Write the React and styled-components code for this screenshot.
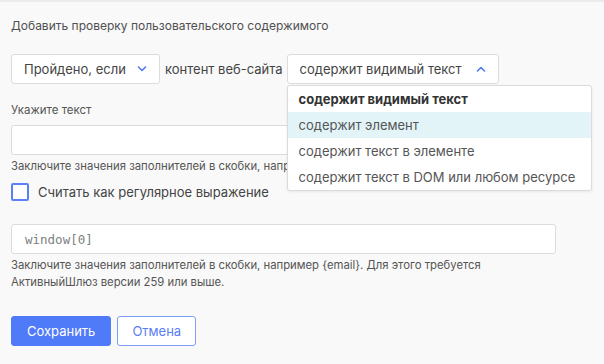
import React from "react";
import styled, { createGlobalStyle } from "styled-components";

const GlobalStyle = createGlobalStyle`
  body {
    margin: 0;
    background: #f9f9f9;
    font-family: Inter, "Noto Sans", sans-serif;
    color: #555;
  }
`;

const options = [
  "содержит видимый текст",
  "содержит элемент",
  "содержит текст в элементе",
  "содержит текст в DOM или любом ресурсе",
];

const Chevron = ({ up }) => (
  <svg width="10" height="6" viewBox="0 0 10 6">
    <path
      d={up ? "M1.5 5 L5 1.5 L8.5 5" : "M1.5 1 L5 4.5 L8.5 1"}
      fill="none"
      stroke="#4f7cf7"
      strokeWidth="1.6"
      strokeLinecap="round"
      strokeLinejoin="round"
    />
  </svg>
);

const App = () => {
  return (
    <>
      <GlobalStyle />
      <TopStrip />
      <Page>
        <Title>Добавить проверку пользовательского содержимого</Title>
        <Row>
          <Select width={149}>
            <span>Пройдено, если</span>
            <Chevron />
          </Select>
          <RowText>контент веб-сайта</RowText>
          <SelectWrap>
            <Select width={212}>
              <span>содержит видимый текст</span>
              <Chevron up />
            </Select>
            <Menu>
              {options.map((opt, i) => (
                <MenuItem key={opt} selected={i === 0} active={i === 1}>
                  {opt}
                </MenuItem>
              ))}
            </Menu>
          </SelectWrap>
        </Row>
        <Label>Укажите текст</Label>
        <Input />
        <Hint>
          Заключите значения заполнителей в скобки, например {"{email}"}. Для
          этого требуется АктивныйШлюз версии 259 или выше.
        </Hint>
        <CheckRow>
          <Checkbox />
          <span>Считать как регулярное выражение</span>
        </CheckRow>
        <Input mono top={23}>
          window[0]
        </Input>
        <HintBlock>
          Заключите значения заполнителей в скобки, например {"{email}"}. Для
          этого требуется
          <br />
          АктивныйШлюз версии 259 или выше.
        </HintBlock>
        <Buttons>
          <Button primary>Сохранить</Button>
          <Button>Отмена</Button>
        </Buttons>
      </Page>
    </>
  );
};

const TopStrip = styled.div`
  height: 2px;
  background: #ececec;
`;
const Page = styled.div`
  padding: 0 11px;
  display: flex;
  flex-direction: column;
  align-items: flex-start;
`;
const Title = styled.div`
  margin-top: 16px;
  font-size: 12px;
  line-height: 16px;
  color: #505050;
`;
const Row = styled.div`
  margin-top: 20px;
  display: flex;
  align-items: center;
  gap: 5px;
`;
const RowText = styled.span`
  font-size: 13px;
  color: #444;
`;
const SelectWrap = styled.div`
  position: relative;
  margin-left: -1px;
`;
const Select = styled.div`
  box-sizing: border-box;
  width: ${(p) => p.width}px;
  height: 30px;
  padding: 0 12px;
  background: #fff;
  border: 1px solid #dcdcdc;
  border-radius: 3px;
  display: flex;
  align-items: center;
  justify-content: space-between;
  font-size: 13px;
  color: #444;
`;
const Menu = styled.div`
  position: absolute;
  top: 31px;
  left: 0;
  width: 305px;
  box-sizing: border-box;
  background: #fff;
  border: 1px solid #dcdcdc;
  border-radius: 3px;
  box-shadow: 0 1px 3px rgba(0, 0, 0, 0.08);
  z-index: 5;
`;
const MenuItem = styled.div`
  height: 26px;
  line-height: 26px;
  padding-left: 11px;
  font-size: 13px;
  white-space: nowrap;
  font-weight: ${(p) => (p.selected ? 700 : 400)};
  color: ${(p) => (p.selected ? "#333" : "#555")};
  background: ${(p) => (p.active ? "#e2f4f8" : "transparent")};
`;
const Label = styled.div`
  margin-top: 18px;
  font-size: 11.5px;
  line-height: 16px;
  color: #555;
`;
const Input = styled.div`
  box-sizing: border-box;
  margin-top: ${(p) => p.top || 7}px;
  width: 545px;
  height: 30px;
  padding: 0 13px;
  background: #fff;
  border: 1px solid #dcdcdc;
  border-radius: 3px;
  display: flex;
  align-items: center;
  font-family: ${(p) => (p.mono ? '"DejaVu Sans Mono", monospace' : "inherit")};
  font-size: 12.5px;
  color: #808080;
`;
const Hint = styled.div`
  margin-top: 4px;
  width: 545px;
  font-size: 11.3px;
  line-height: 14px;
  color: #555;
  white-space: nowrap;
  overflow: hidden;
`;
const HintBlock = styled.div`
  margin-top: 3px;
  font-size: 11.3px;
  line-height: 17px;
  color: #555;
`;
const CheckRow = styled.label`
  margin-top: 10px;
  display: flex;
  align-items: center;
  gap: 9px;
  font-size: 13px;
  color: #444;
`;
const Checkbox = styled.span`
  box-sizing: border-box;
  width: 18px;
  height: 18px;
  border: 2px solid #5a82f6;
  border-radius: 2px;
  background: #fff;
`;
const Buttons = styled.div`
  margin-top: 25px;
  display: flex;
  gap: 6px;
`;
const Button = styled.button`
  box-sizing: border-box;
  height: 30px;
  padding: 0 ${(p) => (p.primary ? 15 : 14)}px;
  border-radius: 3px;
  font-family: Inter, "Noto Sans", sans-serif;
  font-size: 13px;
  border: 1px solid ${(p) => (p.primary ? "#4f7af8" : "#7e9ef7")};
  background: ${(p) => (p.primary ? "#4f7af8" : "#fff")};
  color: ${(p) => (p.primary ? "#fff" : "#5a80f2")};
`;

export default App;
